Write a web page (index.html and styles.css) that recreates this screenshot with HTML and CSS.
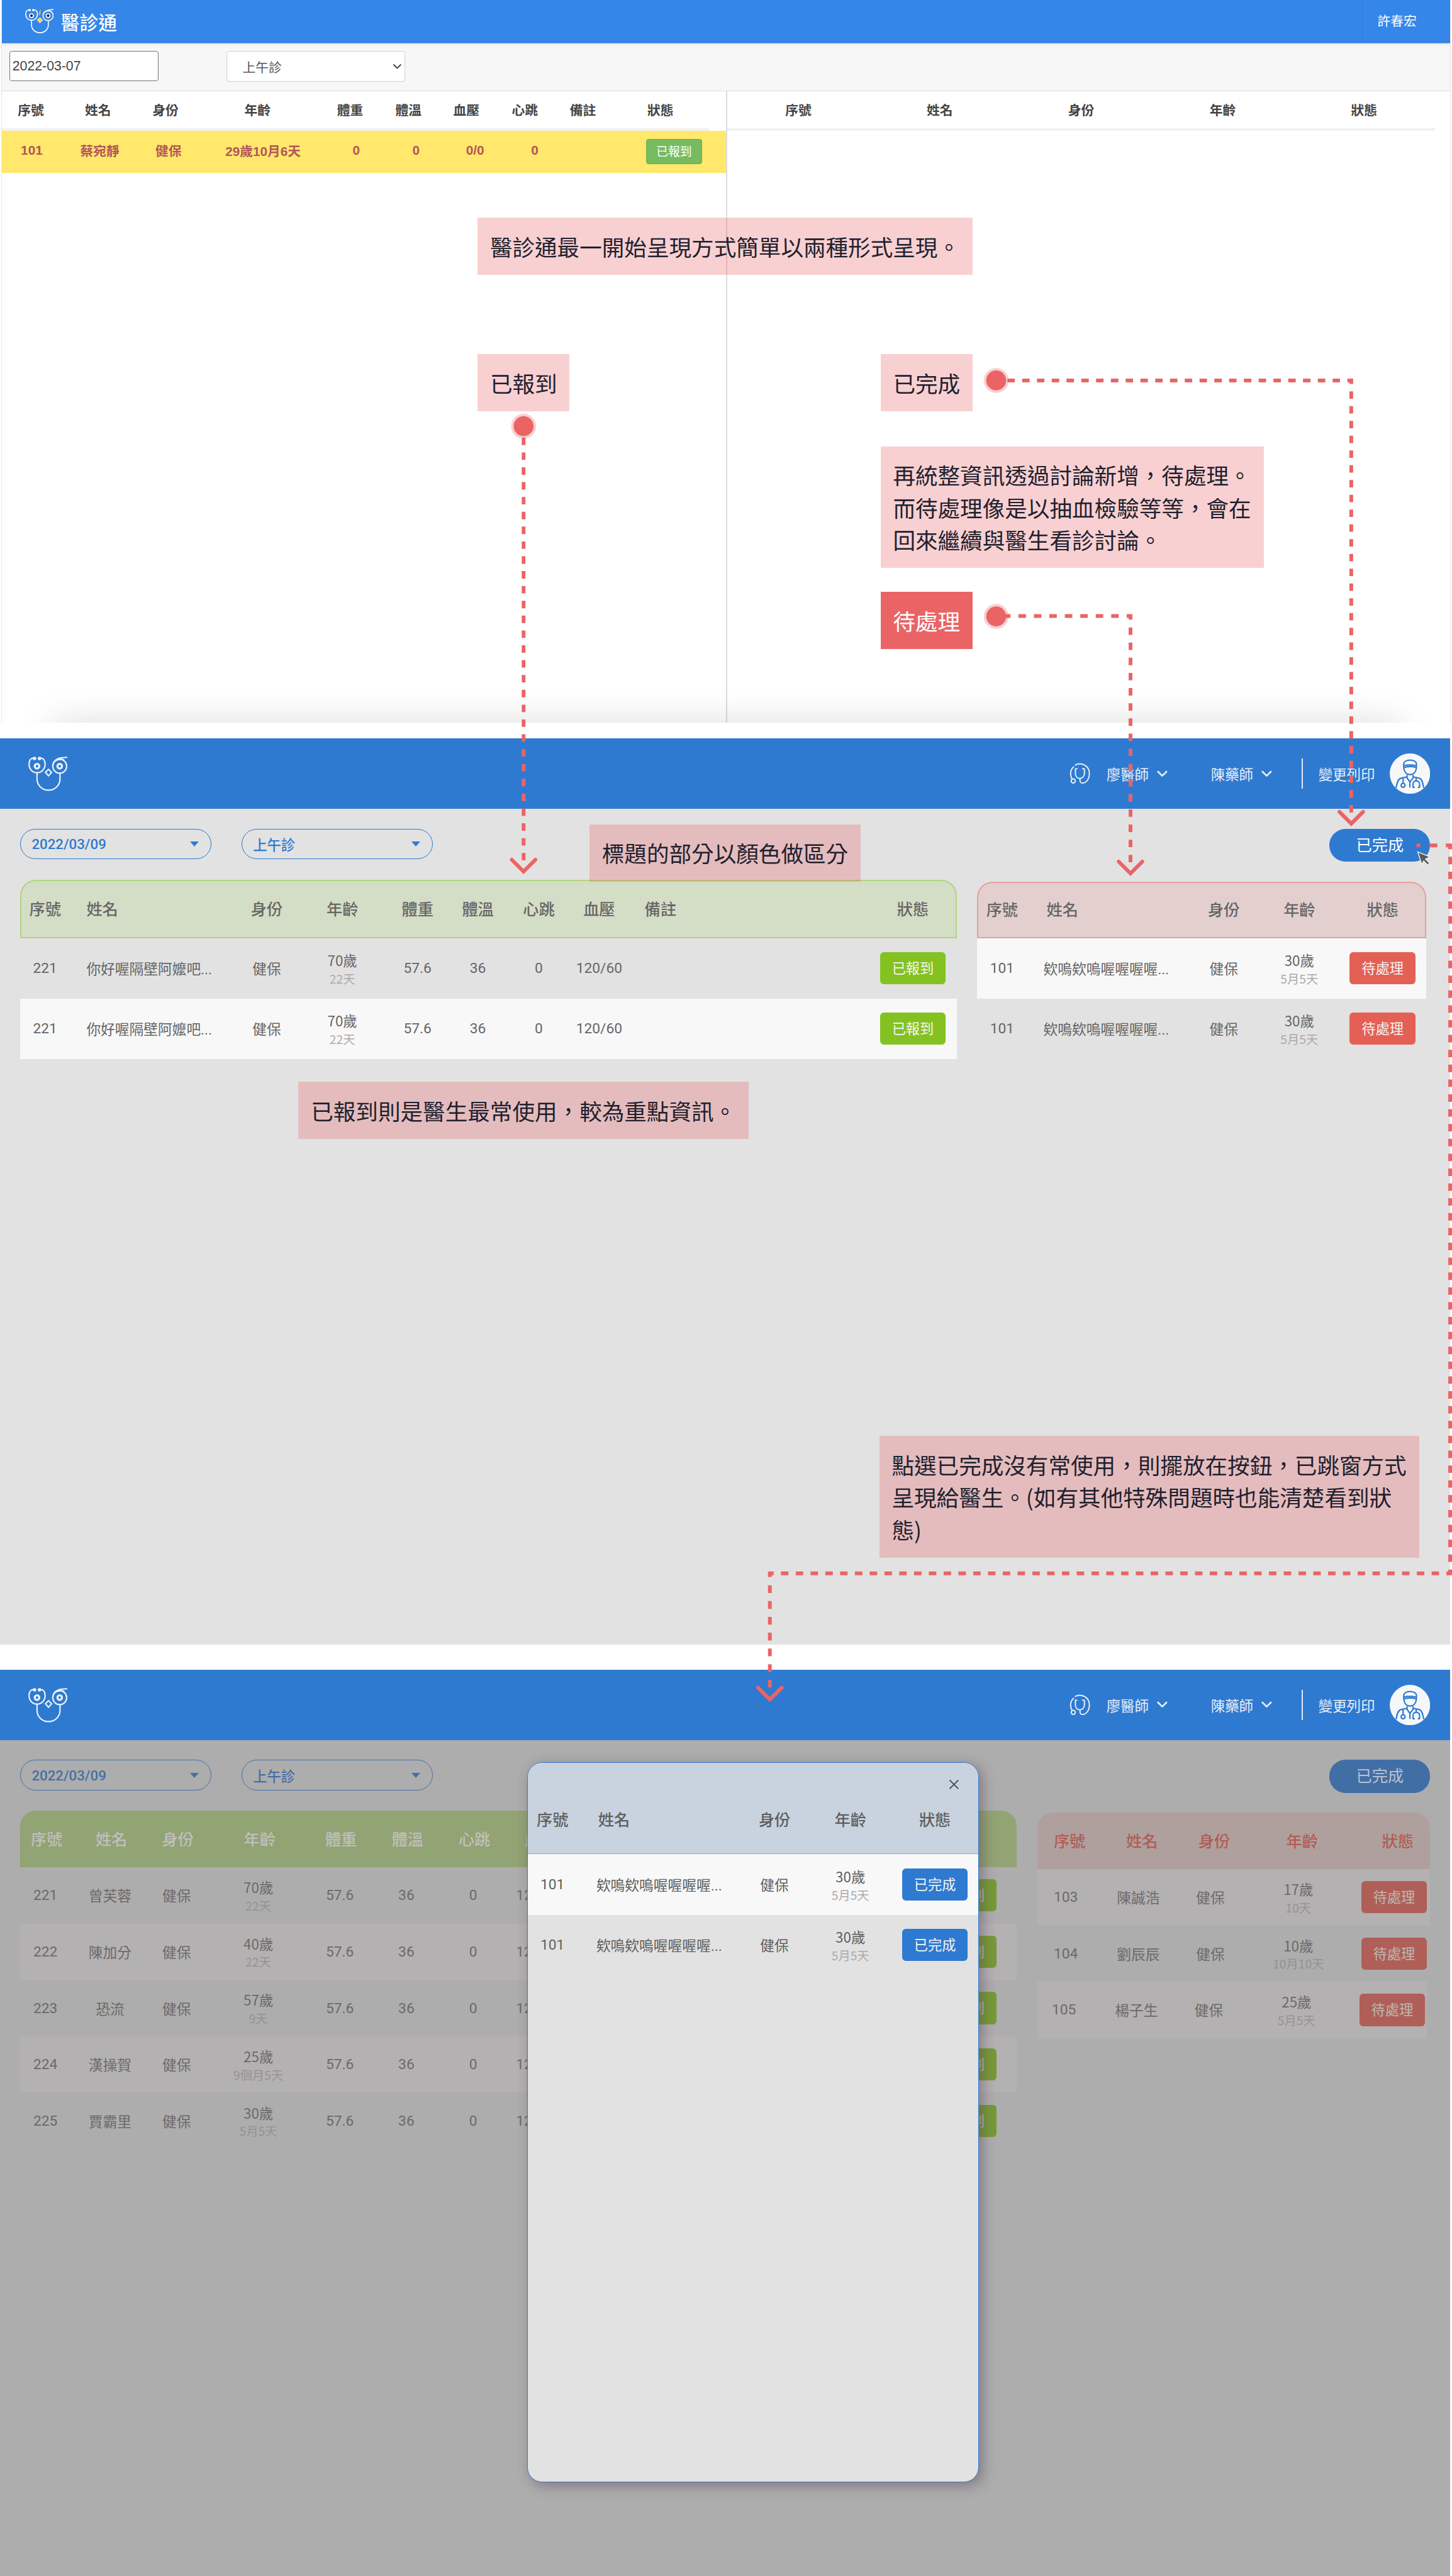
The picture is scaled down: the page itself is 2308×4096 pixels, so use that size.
FILE: index.html
```html
<!DOCTYPE html>
<html lang="zh-Hant">
<head>
<meta charset="utf-8">
<title>醫診通</title>
<link rel="stylesheet" href="styles.css">
</head>
<body>
<svg class="defs" width="0" height="0">
  <symbol id="owl" viewBox="0 0 63 56">
    <g fill="none" stroke="currentColor" stroke-width="2.2" stroke-linecap="round">
      <path d="M10 2.6C4 1.6 1.2 6 1.2 12.500C1.200 20.500 7 26 14 26S27 20.500 27 12.500C27 6 24 1.600 18.500 2.600"/>
      <circle cx="50.500" cy="15.500" r="11.200"/>
      <path d="M40.500 10C44 3.500 50 1.300 62 1.300M45 6C49 4 54 3.800 57 5.200"/>
      <path d="M14 26V36C14 46 22 54 32.500 54S51 46 51 36V27"/>
      <path class="beak" d="M32.500 20.500L37.500 25.300L32.500 31L27.500 25.300Z"/>
    </g>
    <circle cx="10" cy="3" r="2.800" fill="currentColor"/><circle cx="18" cy="3" r="2.800" fill="currentColor"/>
    <circle cx="14" cy="15.500" r="3.700" fill="none" stroke="currentColor" stroke-width="3.200"/>
    <circle cx="50.500" cy="15.500" r="3.700" fill="none" stroke="currentColor" stroke-width="3.200"/>
  </symbol>
  <symbol id="steth" viewBox="0 0 34 34">
    <g fill="none" stroke="currentColor" stroke-width="2" stroke-linecap="round" stroke-linejoin="round">
      <path d="M6.500 6.500C1 11 .5 20 4 25.500M9.500 3.500C18-1.500 32 4 32 17C32 26 27 32.500 21 32.500C17.500 32.500 16.500 30 17 26"/>
      <path d="M12 9.500H9.500V17C9.500 22 12.500 25 16.500 25S24 22 24 17V9.500H21"/>
      <circle cx="6" cy="29" r="3.300"/>
    </g>
  </symbol>
  <symbol id="doctor" viewBox="0 0 65 65">
    <circle cx="32.500" cy="32.500" r="32.500" fill="#f6f7f8"/>
    <g fill="none" stroke="#2e7ad1" stroke-width="2.200" stroke-linecap="round" stroke-linejoin="round">
      <path d="M22.500 20V17.500C22.500 13 27 10.800 32.500 10.800S43 13 43 17.500V20C43 29 39 34 32.700 34S22.500 29 22.500 20ZM23 19.800C28 18.300 37 18.300 42.500 19.800M24 22.500C29 21 37 21 42 22.500"/>
      <path d="M10.500 54.500C12 46 13.500 41 18 39.800L27 38L32.500 46L38.500 38L47.500 39.800C51.500 41 53 46 54.500 54.500M28 35.500V38M37.500 35.500V38M32.500 46V54"/>
      <path d="M21.500 39.500V48"/><circle cx="21.500" cy="51.300" r="3.200"/>
      <path d="M42.500 39.500V44M39.500 54.500H37.500V49C37.500 42.500 48 42.500 48 49V54.500H46"/>
    </g>
  </symbol>
  <symbol id="chev" viewBox="0 0 18 11"><path d="M1.800 1.800L9 9L16.200 1.800" fill="none" stroke="currentColor" stroke-width="2.800" stroke-linecap="round" stroke-linejoin="round"/></symbol>
</svg>

<main class="page">
  <section class="old">
    <header class="old-bar">
      <svg class="old-logo" viewBox="0 0 63 56" preserveAspectRatio="none"><use href="#owl"/><path d="M30.500 15C29.500 9 31 4 35 1C33.500 5 35 8 32.500 15Z" fill="#f3b73e"/><path d="M32.500 20L37.500 25.300L32.500 32L27.500 25.300Z" fill="#f7cf6a"/><circle cx="14" cy="15.500" r="3" fill="#222"/><circle cx="50.500" cy="15.500" r="3" fill="#222"/></svg>
      <span class="old-brand">醫診通</span>
      <span class="old-user">許春宏</span>
    </header>
    <div class="old-tools">
      <div class="old-date">2022-03-07</div>
      <div class="old-select"><span>上午診</span><svg width="15" height="9" viewBox="0 0 15 9"><path d="M1.500 1.500L7.500 7.500L13.500 1.500" fill="none" stroke="#444" stroke-width="2"/></svg></div>
    </div>
    <div class="old-body">
      <div class="old-left">
        <div class="old-row old-head cols-a"><span>序號</span><span>姓名</span><span>身份</span><span>年齡</span><span>體重</span><span>體溫</span><span>血壓</span><span>心跳</span><span>備註</span><span>狀態</span></div>
        <div class="old-row old-hit cols-b"><span>101</span><span>蔡宛靜</span><span>健保</span><span>29歲10月6天</span><span>0</span><span>0</span><span>0/0</span><span>0</span><span></span><span class="old-btn">已報到</span></div>
      </div>
      <div class="old-right">
        <div class="old-row old-head cols-c"><span>序號</span><span>姓名</span><span>身份</span><span>年齡</span><span>狀態</span></div>
      </div>
    </div>
  </section>

  <section class="app app-list">
    <header class="bar">
      <svg class="logo"><use href="#owl"/></svg>
      <svg class="steth"><use href="#steth"/></svg>
      <span class="doc">廖醫師</span><svg class="chev"><use href="#chev"/></svg>
      <span class="pharm">陳藥師</span><svg class="chev"><use href="#chev"/></svg>
      <i class="sep"></i>
      <span class="print">變更列印</span>
      <svg class="avatar"><use href="#doctor"/></svg>
    </header>
    <div class="filters">
      <div class="pill num">2022/03/09<i></i></div>
      <div class="pill">上午診<i></i></div>
      <div class="done">已完成</div>
    </div>
    <div class="tables">
      <div class="table t-green">
        <div class="row head cols-d"><span>序號</span><span class="name">姓名</span><span>身份</span><span>年齡</span><span>體重</span><span>體溫</span><span>心跳</span><span>血壓</span><span>備註</span><span></span><span>狀態</span></div>
        <div class="row cols-d"><span>221</span><span class="name">你好喔隔壁阿嬤吧...</span><span>健保</span><span class="age">70歲<small>22天</small></span><span>57.6</span><span>36</span><span>0</span><span>120/60</span><span></span><span></span><span><b class="btn green">已報到</b></span></div>
        <div class="row light cols-d"><span>221</span><span class="name">你好喔隔壁阿嬤吧...</span><span>健保</span><span class="age">70歲<small>22天</small></span><span>57.6</span><span>36</span><span>0</span><span>120/60</span><span></span><span></span><span><b class="btn green">已報到</b></span></div>
      </div>
      <div class="table t-red">
        <div class="row head cols-e"><span>序號</span><span class="name">姓名</span><span>身份</span><span>年齡</span><span>狀態</span></div>
        <div class="row light cols-e"><span>101</span><span class="name">欸嗚欸嗚喔喔喔喔...</span><span>健保</span><span class="age">30歲<small>5月5天</small></span><span><b class="btn red">待處理</b></span></div>
        <div class="row cols-e"><span>101</span><span class="name">欸嗚欸嗚喔喔喔喔...</span><span>健保</span><span class="age">30歲<small>5月5天</small></span><span><b class="btn red">待處理</b></span></div>
      </div>
    </div>
  </section>

  <section class="app app-dim">
    <header class="bar">
      <svg class="logo"><use href="#owl"/></svg>
      <svg class="steth"><use href="#steth"/></svg>
      <span class="doc">廖醫師</span><svg class="chev"><use href="#chev"/></svg>
      <span class="pharm">陳藥師</span><svg class="chev"><use href="#chev"/></svg>
      <i class="sep"></i>
      <span class="print">變更列印</span>
      <svg class="avatar"><use href="#doctor"/></svg>
    </header>
    <div class="filters">
      <div class="pill num">2022/03/09<i></i></div>
      <div class="pill">上午診<i></i></div>
      <div class="done">已完成</div>
    </div>
    <div class="tables">
      <div class="table d-green">
        <div class="row head cols-f"><span>序號</span><span>姓名</span><span>身份</span><span>年齡</span><span>體重</span><span>體溫</span><span>心跳</span><span>血壓</span><span></span><span></span></div>
        <div class="row cols-f"><span>221</span><span>曾芙蓉</span><span>健保</span><span class="age">70歲<small>22天</small></span><span>57.6</span><span>36</span><span>0</span><span>120/60</span><span></span><span><b class="btn green">已報到</b></span></div>
        <div class="row light cols-f"><span>222</span><span>陳加分</span><span>健保</span><span class="age">40歲<small>22天</small></span><span>57.6</span><span>36</span><span>0</span><span>120/60</span><span></span><span><b class="btn green">已報到</b></span></div>
        <div class="row cols-f"><span>223</span><span>恐流</span><span>健保</span><span class="age">57歲<small>9天</small></span><span>57.6</span><span>36</span><span>0</span><span>120/60</span><span></span><span><b class="btn green">已報到</b></span></div>
        <div class="row light cols-f"><span>224</span><span>漢操賀</span><span>健保</span><span class="age">25歲<small>9個月5天</small></span><span>57.6</span><span>36</span><span>0</span><span>120/60</span><span></span><span><b class="btn green">已報到</b></span></div>
        <div class="row cols-f"><span>225</span><span>賈霸里</span><span>健保</span><span class="age">30歲<small>5月5天</small></span><span>57.6</span><span>36</span><span>0</span><span>120/60</span><span></span><span><b class="btn green">已報到</b></span></div>
      </div>
      <div class="table d-red">
        <div class="row head cols-g"><span>序號</span><span>姓名</span><span>身份</span><span>年齡</span><span>狀態</span></div>
        <div class="row light cols-g"><span>103</span><span>陳誠浩</span><span>健保</span><span class="age">17歲<small>10天</small></span><span><b class="btn red">待處理</b></span></div>
        <div class="row cols-g"><span>104</span><span>劉辰辰</span><span>健保</span><span class="age">10歲<small>10月10天</small></span><span><b class="btn red">待處理</b></span></div>
        <div class="row light last cols-h"><span>105</span><span>楊子生</span><span>健保</span><span class="age">25歲<small>5月5天</small></span><span><b class="btn red">待處理</b></span></div>
      </div>
    </div>
    <div class="modal">
      <div class="modal-head">
        <svg class="close" viewBox="0 0 17 17"><path d="M1.500 1.500L15.500 15.500M15.500 1.500L1.500 15.500" fill="none" stroke="#555" stroke-width="2"/></svg>
        <div class="row head cols-m"><span>序號</span><span class="name">姓名</span><span>身份</span><span>年齡</span><span>狀態</span></div>
      </div>
      <div class="row light cols-m"><span>101</span><span class="name">欸嗚欸嗚喔喔喔喔...</span><span>健保</span><span class="age">30歲<small>5月5天</small></span><span><b class="btn blue">已完成</b></span></div>
      <div class="row cols-m"><span>101</span><span class="name">欸嗚欸嗚喔喔喔喔...</span><span>健保</span><span class="age">30歲<small>5月5天</small></span><span><b class="btn blue">已完成</b></span></div>
    </div>
  </section>

  <p class="note n1">醫診通最一開始呈現方式簡單以兩種形式呈現。</p>
  <p class="note n2">已報到</p>
  <p class="note n3">已完成</p>
  <p class="note n4">再統整資訊透過討論新增，待處理。<br>而待處理像是以抽血檢驗等等，會在<br>回來繼續與醫生看診討論。</p>
  <p class="note n5 solid">待處理</p>
  <p class="note n6">標題的部分以顏色做區分</p>
  <p class="note n7">已報到則是醫生最常使用，較為重點資訊。</p>
  <p class="note n8">點選已完成沒有常使用，則擺放在按鈕，已跳窗方式<br>呈現給醫生。(如有其他特殊問題時也能清楚看到狀<br>態)</p>

  <svg class="flow" width="2335" height="4144" viewBox="0 0 2335 4144">
    <g fill="#ea6466" stroke="#f8d0d0" stroke-width="4">
      <circle cx="842" cy="685.600" r="18"/><circle cx="1602" cy="612" r="18"/><circle cx="1602" cy="991.600" r="18"/>
    </g>
    <g fill="none" stroke="#ea6466" stroke-width="6">
      <path d="M842 704V1384" stroke-dasharray="12 11.860"/>
      <path d="M1620 612H2173V1307.500" stroke-dasharray="12 11.770"/>
      <path d="M1613 991H1818V997" stroke-dasharray="12 12.850"/>
      <path d="M1818 1009.300V1387" stroke-dasharray="12 12.390"/>
      <path d="M2278 1360H2284M2299 1360H2311.500M2325 1360H2332V1366"/>
      <path d="M2332 1378.300V2513" stroke-dasharray="12 11.880"/>
      <path d="M2332 2525V2531H1238V2537.500" stroke-dasharray="12 11.780"/>
      <path d="M1238 2550.200V2714.600" stroke-dasharray="12.500 12.900"/>
      <g stroke-linecap="round">
        <path d="M823 1383L842 1402L861 1383"/>
        <path d="M2154 1306L2173 1325L2192 1306"/>
        <path d="M1799 1386L1818 1405L1837 1386"/>
        <path d="M1219 2715L1238 2734L1257 2715"/>
      </g>
    </g>
    <path d="M2280 1370.500L2299.500 1378.500L2292.500 1382L2299 1388.500L2296 1391.500L2289.500 1385L2286.500 1391Z" fill="#585858" stroke="#f4f4f4" stroke-width="1.500"/>
  </svg>
</main>
</body>
</html>
```
FILE: styles.css
```css
* { box-sizing: border-box; }
html, body { margin: 0; background: #fff; overflow: hidden; }
.defs { position: absolute; }
.page {
  zoom: 0.98844;
  position: relative;
  width: 2335px;
  height: 4144px;
  overflow: hidden;
  font-family: Roboto, "Noto Sans CJK TC", sans-serif;
  background: #fff;
}
span, b, .pill, .done { white-space: nowrap; }

/* first version of the product */
.old {
  position: relative;
  height: 1162px;
  margin: 0 2px;
  overflow: hidden;
  background: #fff;
  border-left: 1px solid #e6e6e6;
  border-right: 1px solid #e6e6e6;
  font-family: "Liberation Sans", "Noto Sans CJK TC", sans-serif;
}
.old::after {
  content: "";
  position: absolute;
  left: 85px;
  right: 85px;
  top: 1170px;
  height: 60px;
  box-shadow: 0 0 60px 5px rgba(0, 0, 0, .15);
}
.old-bar {
  display: flex;
  align-items: center;
  height: 70px;
  margin: 0 -1px;
  padding-left: 38px;
  background: #3486e8;
  border-bottom: 1px solid #5f97dc;
  color: #fff;
}
.old-logo { width: 46px; height: 40px; color: #fff; }
.old-brand { margin-left: 12px; font-size: 30px; font-weight: 500; }
.old-user {
  margin-left: auto;
  width: 143px;
  height: 69px;
  padding-left: 24px;
  border-left: 2px solid #2f7bd6;
  font-size: 21px;
  line-height: 68px;
}
.old-tools {
  display: flex;
  align-items: flex-start;
  height: 76px;
  margin: 0 -1px;
  padding: 12px 0 0 13px;
  background: #f7f7f7;
  box-shadow: inset 0 3px 4px rgba(0, 0, 0, .05);
}
.old-date {
  width: 240px;
  height: 49px;
  padding-left: 4px;
  border: 2px solid #767676;
  border-radius: 4px;
  background: #fff;
  color: #444;
  font-size: 21.500px;
  line-height: 47px;
}
.old-select {
  display: flex;
  align-items: center;
  justify-content: space-between;
  width: 288px;
  height: 50px;
  margin-left: 109px;
  padding: 0 5px 0 25px;
  border: 2px solid #d0d0d0;
  border-radius: 4px;
  background: #fff;
  color: #555;
  font-size: 21px;
}
.old-body { display: flex; height: 1016px; border-top: 2px solid #ddd; margin: 0 -1px; }
.old-left { width: 1168px; border-right: 3px solid #dcdcdc; }
.old-right { flex: 1; }
.old-row { display: grid; align-items: center; justify-items: center; font-size: 21px; font-weight: 700; }
.old-head { height: 63px; color: #444; padding-bottom: 4px; box-shadow: inset 0 -4px 0 #f1f1f1; }
.old-left .old-head { width: 1138px; }
.old-right .old-head { width: 1138px; }
.old-hit { height: 68px; background: #ffe86b; color: #b4555a; padding-bottom: 4px; }
.cols-a { grid-template-columns: 95px 121px 96px 200px 98px 90px 96px 92px 95px 154px; }
.cols-b { grid-template-columns: 98px 121px 100px 204px 96px 96px 94px 98px 92px 166px; }
.cols-c { grid-template-columns: repeat(5, 227.500px); }
.old-btn {
  width: 90px;
  height: 41px;
  margin-top: 4px;
  border: 1px solid #6aab52;
  border-radius: 4px;
  background: #77bb60;
  color: #fff;
  font-size: 19px;
  font-weight: 400;
  line-height: 40px;
  text-align: center;
}

/* redesigned screens */
.app { position: relative; width: 2332px; color: #666; }
.app-list { height: 1458px; margin-top: 26px; background: #e2e2e2; }
.app-dim { height: 1458px; margin-top: 40px; background: #adadad; color: #6c6969; }
.bar {
  display: flex;
  align-items: center;
  height: 113px;
  padding: 0 32px 0 46px;
  background: #2e7ad1;
  color: #e9eff7;
  font-size: 22.700px;
}
.logo { width: 63px; height: 56px; margin-bottom: -2px; color: #eef2f7; }
.steth { width: 34px; height: 34px; margin-left: auto; }
.doc { margin-left: 25px; }
.pharm { margin-left: 70px; }
.chev { width: 17px; height: 11px; margin-left: 13px; }
.sep { width: 2px; height: 49px; margin-left: 48px; background: #e4ecf6; }
.print { margin-left: 25px; }
.avatar { width: 65px; height: 65px; margin-left: 24px; }
.filters { display: flex; align-items: flex-start; height: 114px; padding: 32px 32px 0; }
.pill {
  display: flex;
  align-items: center;
  justify-content: space-between;
  width: 308px;
  height: 49px;
  margin-right: 48px;
  padding: 1px 19px 0 18px;
  border: 2px solid #2e7ad1;
  border-radius: 25px;
  color: #2e7ad1;
  font-size: 22.500px;
  font-weight: 500;
}
.pill i {
  border: 8px solid transparent;
  border-top: 9px solid #2e7ad1;
  border-bottom: 0;
}
.done {
  width: 162px;
  height: 53px;
  margin-left: auto;
  border-radius: 26px;
  background: #2e7ad1;
  color: #fff;
  font-size: 25.500px;
  line-height: 54px;
  text-align: center;
}
.tables { display: flex; align-items: flex-start; padding: 0 32px; }
.row { display: grid; align-items: center; justify-items: center; height: 97.300px; font-size: 23px; }
.light { background: #f8f8f8; }
.head { height: 94px; padding-bottom: 3px; font-size: 25.500px; font-weight: 500; border-radius: 25px 25px 0 0; }
.name { justify-self: start; padding-left: 26px; }
.age {
  display: flex;
  flex-direction: column;
  align-items: center;
  padding-top: 4px;
  font-family: "Noto Sans CJK TC", sans-serif;
  font-size: 22.700px;
  line-height: 30px;
}
.age small { color: #aaa; font-size: 19.500px; }
.btn {
  display: block;
  width: 106px;
  height: 52px;
  border-radius: 6px;
  color: #f4f4f4;
  font-size: 22.500px;
  font-weight: 400;
  line-height: 53px;
  text-align: center;
}
.green { background: #84c222; }
.red { background: #e46055; }
.blue { background: #2e7ad1; }

.t-green { width: 1507px; }
.t-green .head { background: #d4ddc5; box-shadow: inset 0 0 0 2px #b2d482; }
.t-red { width: 723px; margin: 3px 0 0 32px; }
.t-red .head { height: 91px; background: #e3cfce; box-shadow: inset 0 0 0 2px #e8a09b; }
.t-red .head .name { padding-left: 31px; }
.cols-d { grid-template-columns: 81px 266px 100px 143px 99px 95px 101px 93px 104px 283px 142px; }
.cols-e { grid-template-columns: 81px 266px 100px 143px 125px; }

.app-dim .pill { border-color: #456fa6; color: #456fa6; }
.app-dim .pill i { border-top-color: #456fa6; }
.app-dim .done { background: #426ea6; color: #bcc3cc; }
.app-dim .tables .row { height: 90.700px; }
.app-dim .tables .light { background: #b3b1b2; }
.app-dim .tables small { color: #959293; }
.app-dim .tables .btn { color: #bdb9b6; }
.app-dim .tables .green { background: #779938; }
.app-dim .tables .red { background: #af5f57; }
.d-green { width: 1603px; }
.d-green .head { padding-left: 2px; background: #92a374; color: #c0bfbd; }
.d-red { width: 632px; margin: 3px 0 0 33px; }
.d-red .head { padding-left: 6px; background: #afa09e; color: #b15d55; }
.d-red .last { width: 627px; }
.cols-f { grid-template-columns: 82px 126px 88px 175px 87px 127px 88px 124px 536px 170px; }
.cols-g { grid-template-columns: 92px 141px 91px 192px 116px; }
.cols-h { grid-template-columns: 86px 147px 86px 196px 112px; }

.modal {
  position: absolute;
  left: 848px;
  top: 149px;
  width: 726px;
  height: 1158px;
  overflow: hidden;
  border: 2px solid #2e7ad1;
  border-radius: 24px;
  background: #e2e2e2;
  box-shadow: 6px 6px 20px rgba(80, 60, 80, .45);
  color: #5f5f5f;
}
.modal-head { height: 147px; background: #c8d3df; border-bottom: 2px solid #7fabdf; }
.modal-head .head { height: 100px; margin-top: 24px; }
.close { display: block; width: 17px; height: 17px; margin: 0 30px 0 auto; position: relative; top: 26px; }
.modal .name { padding-left: 31px; }
.modal .modal-head .name { padding-left: 34px; }
.cols-m { grid-template-columns: 79px 267px 101px 143px 129px; }

/* annotations laid over the screens */
.note {
  position: absolute;
  margin: 0;
  padding: 20px;
  background: rgba(234, 100, 102, .3);
  color: #20212f;
  font-family: "Noto Sans CJK TC", sans-serif;
  font-size: 36px;
  line-height: 52px;
  white-space: nowrap;
}
.solid { background: #ea6466; color: #fff; }
.n1 { left: 768px; top: 350px; width: 796px; }
.n2 { left: 768px; top: 570px; width: 148px; }
.n3 { left: 1416px; top: 570px; width: 148px; }
.n4 { left: 1416px; top: 718px; width: 616px; }
.n5 { left: 1416px; top: 952px; width: 148px; }
.n6 { left: 948px; top: 1326px; width: 436px; }
.n7 { left: 480px; top: 1740px; width: 724px; }
.n8 { left: 1414px; top: 2310px; width: 868px; }
.flow { position: absolute; left: 0; top: 0; }
```
